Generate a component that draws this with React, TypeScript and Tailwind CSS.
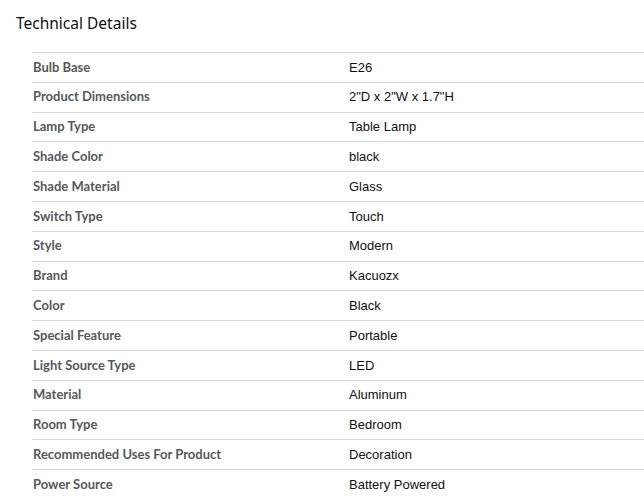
const details: [string, string][] = [
  ["Bulb Base", "E26"],
  ["Product Dimensions", '2"D x 2"W x 1.7"H'],
  ["Lamp Type", "Table Lamp"],
  ["Shade Color", "black"],
  ["Shade Material", "Glass"],
  ["Switch Type", "Touch"],
  ["Style", "Modern"],
  ["Brand", "Kacuozx"],
  ["Color", "Black"],
  ["Special Feature", "Portable"],
  ["Light Source Type", "LED"],
  ["Material", "Aluminum"],
  ["Room Type", "Bedroom"],
  ["Recommended Uses For Product", "Decoration"],
  ["Power Source", "Battery Powered"],
];

const App = () => {
  return (
    <div className="w-[644px] h-[498px] overflow-hidden bg-white">
      <h2 className="pl-[16px] pt-[11px] h-[52px] text-[15.5px] leading-[24px] text-[#0f1111] font-['Noto_Sans',sans-serif]">
        Technical Details
      </h2>
      <div className="ml-[32px] w-[660px] border-t border-[#d5d9d9]">
        {details.map(([label, value]) => (
          <div
            key={label}
            className="flex h-[29.8px] items-center border-b border-[#d5d9d9]"
          >
            <div className="w-[317px] pl-[1px] text-[13px] font-bold text-[#565959] font-['Lato',sans-serif]">
              {label}
            </div>
            <div className="text-[13px] text-[#0f1111] font-['Liberation_Sans',Arial,sans-serif]">
              {value}
            </div>
          </div>
        ))}
      </div>
    </div>
  );
};

export default App;
